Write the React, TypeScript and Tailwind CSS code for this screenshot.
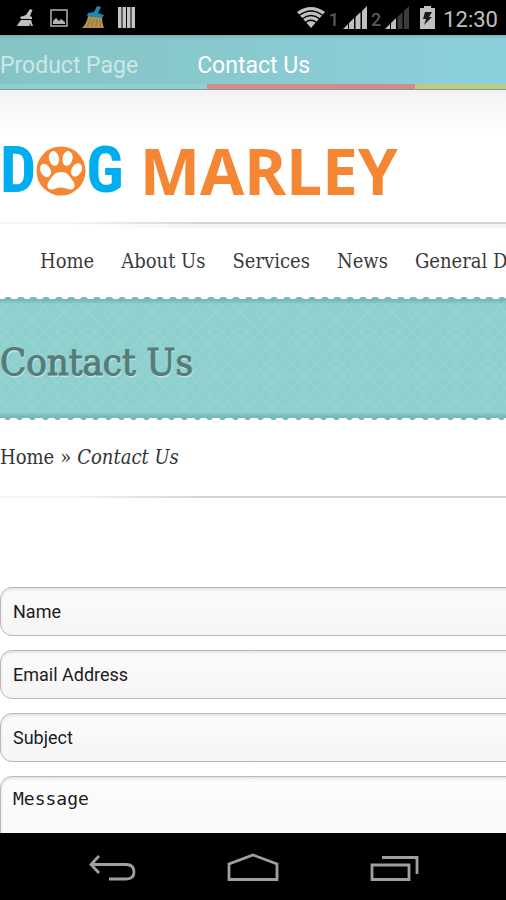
import { useState } from "react";

type Tab = "product" | "contact";

const navItems = [
  { label: "Home", href: "#home" },
  { label: "About Us", href: "#about" },
  { label: "Services", href: "#services" },
  { label: "News", href: "#news" },
  { label: "General D", href: "#general" },
];

const fields = [
  { id: "name", label: "Name", type: "text" },
  { id: "email", label: "Email Address", type: "email" },
  { id: "subject", label: "Subject", type: "text" },
];

const fieldClass =
  "block w-full rounded-xl border border-[#b8b8b8] bg-linear-to-b from-[#fcfcfc] to-[#f5f5f5] px-3 text-[18px] text-[#1c1c1c] shadow-[inset_0_2px_3px_#e4e4e4] outline-none placeholder:text-[#1c1c1c] placeholder:opacity-100";

function SignalIcon({ dim }: { dim?: boolean }) {
  return (
    <svg width="24" height="23" viewBox="0 0 24 23" aria-hidden="true">
      <path d="M0 23 5 18V23Z M6 17 11 12V23H6Z" fill="#c0c0c0" />
      <path
        d="M12.500 11 17.500 6V23H12.500Z M19 5 24 0V23H19Z"
        fill={dim ? "#3c3c3c" : "#c0c0c0"}
      />
    </svg>
  );
}

function StatusBar() {
  return (
    <div className="flex h-[35px] shrink-0 items-center justify-between bg-black pr-2 pl-4 font-[Roboto,sans-serif] text-[#c0c0c0]">
      <div className="flex items-center gap-4">
        {/* Cleaner notification */}
        <svg width="18" height="18" viewBox="0 0 18 18" aria-hidden="true">
          <path
            d="M14 0 16.500 1 14 7 16 8V10H5L4 8 10 6Z M5 11H15L17 17H15L14 14 13.500 17H1L2 15Z"
            fill="#c0c0c0"
          />
        </svg>
        {/* Screenshot notification */}
        <svg width="18" height="18" viewBox="0 0 18 18" aria-hidden="true">
          <path d="M1 1H17V17H1Z" fill="none" stroke="#b4b4b4" strokeWidth="1.500" />
          <path d="M3 15V12L6 9 9 12 11 10 15 13V15Z" fill="#b4b4b4" />
        </svg>
        {/* Broom */}
        <svg className="-ml-0.5" width="22" height="23" viewBox="0 0 22 23" aria-hidden="true">
          <path d="M6 10 20 11Q20 17 22 22H0Q5 17 6 10Z" fill="#b2914a" />
          <path d="M9 13 5 21M12 13 9 21M15 13 14 21M18 13 18 21" stroke="#94743a" />
          <path d="M15 0 19 1 16 7 22 9 20 12 5 10 6 7 12 6Z" fill="#1e86b4" />
        </svg>
        <svg className="-ml-0.5" width="18" height="21" viewBox="0 0 18 21" aria-hidden="true">
          <path
            d="M0 0H3.500V21H0ZM4.500 0H8V21H4.500ZM9 0H12.500V21H9ZM13.500 0H17V21H13.500Z"
            fill="#c4c4c4"
          />
        </svg>
      </div>

      <div className="flex items-center">
        <svg width="28" height="21" viewBox="0 0 28 21" aria-hidden="true">
          <path d="M0 5Q14-5 28 5L14 21Z" fill="#c0c0c0" />
          <path
            d="M2 8.500Q14-.5 26 8.500M5 12Q14 5 23 12M8.500 15.500Q14 11 19.500 15.500"
            fill="none"
            stroke="#000"
            strokeWidth="1.500"
          />
        </svg>
        <span className="mt-1 mr-1 ml-1 text-lg leading-none font-medium text-[#5a5a5a]">1</span>
        <SignalIcon />
        <span className="mt-1 mr-1 ml-1 text-lg leading-none font-medium text-[#5a5a5a]">2</span>
        <SignalIcon dim />
        <svg className="ml-[11px]" width="15" height="23" viewBox="0 0 15 23" aria-hidden="true">
          <path d="M4 0H11V2H15V23H0V2H4Z" fill="#c0c0c0" />
          <path d="M5 6H12L9 11H12L4 19 6 13H3Z" fill="#1a1a1a" />
        </svg>
        <span className="mt-1 ml-2 text-[22px]">12:30</span>
      </div>
    </div>
  );
}

function TabBar({ tab, setTab }: { tab: Tab; setTab: (tab: Tab) => void }) {
  return (
    <div className="shrink-0 bg-linear-to-r from-[#86c4c4] to-[#8ad0dc] font-[Roboto,sans-serif] text-[23px]">
      <div className="h-1 bg-linear-to-b from-[#6fa5a8]/60 to-transparent" />
      <div className="flex h-[45px] items-center gap-[59px] pt-[10px]">
        <button
          onClick={() => setTab("product")}
          className={tab === "product" ? "text-white" : "text-[#cde7e7]"}
        >
          Product Page
        </button>
        <button
          onClick={() => setTab("contact")}
          className={tab === "contact" ? "text-white" : "text-[#cde7e7]"}
        >
          Contact Us
        </button>
      </div>
      <div className="flex h-[6px] border-b border-[#829a9a]">
        <div className="w-[41%] bg-[#8ed0ce]" />
        <div className="w-[41%] bg-[#cf8c8a]" />
        <div className="flex-1 bg-[#bfca86]" />
      </div>
    </div>
  );
}

function Paw() {
  return (
    <svg className="size-[50px] shrink-0" viewBox="0 0 50 50" aria-hidden="true">
      <circle cx="25" cy="25" r="24.500" fill="#f58634" />
      <g fill="#fff">
        <ellipse cx="18" cy="12.500" rx="5" ry="7.500" transform="rotate(-12 18 12.500)" />
        <ellipse cx="31.500" cy="12.500" rx="5" ry="7.500" transform="rotate(12 31.500 12.500)" />
        <ellipse cx="9.500" cy="24.500" rx="5" ry="7" transform="rotate(-28 9.500 24.500)" />
        <ellipse cx="40.500" cy="24" rx="5" ry="7" transform="rotate(28 40.500 24)" />
        <path d="M25 26C32 26 34 31 37 35C41 41 37 45 32 43Q25 40 18 43C13 45 9 41 13 35C16 31 18 26 25 26Z" />
      </g>
    </svg>
  );
}

function Logo() {
  return (
    <a
      href="#home"
      aria-label="Dog Marley"
      className="flex h-[132px] items-center pt-[30px] text-[64px] leading-none font-bold"
    >
      <span className="font-['Roboto_Condensed',Roboto,sans-serif] text-[#00adef]">D</span>
      <Paw />
      <span className="font-['Roboto_Condensed',Roboto,sans-serif] text-[#00adef]">G</span>
      <span className="ml-4 font-['Noto_Sans',sans-serif] text-[#f58634]">MARLEY</span>
    </a>
  );
}

/* One tile holds three scallops, 38px wide */
function Scallops({ id, flip }: { id: string; flip?: boolean }) {
  return (
    <svg className="block h-[4px] w-full" aria-hidden="true">
      <pattern id={id} width="38" height="4" patternUnits="userSpaceOnUse">
        <path
          d={
            flip
              ? "M0 0H38V1H36L34 3H31L29 1H23L21 3H18L16 1H11L9 3H6L4 1H0Z"
              : "M0 4V3H4L6 1H10L12 3H17L19 1H23L25 3H29L31 1H35L38 3V4Z"
          }
          fill="#79b8b6"
        />
      </pattern>
      <rect width="100%" height="4" fill={`url(#${id})`} />
    </svg>
  );
}

function Banner() {
  return (
    <div>
      <Scallops id="scallop-top" />
      <div className="relative bg-[#8dd0cd]">
        <svg className="absolute inset-0 size-full" aria-hidden="true">
          <pattern id="lattice" width="38" height="38" patternUnits="userSpaceOnUse">
            <path
              d="M0 38 38 0M0 25.330 25.330 0M0 12.670 12.670 0M12.670 38 38 12.670M25.330 38 38 25.330M0 0 38 38M0 12.670 25.330 38M0 25.330 12.670 38M12.670 0 38 25.330M25.330 0 38 12.670"
              stroke="#9dd7d6"
              strokeWidth="0.800"
              fill="none"
            />
          </pattern>
          <rect width="100%" height="100%" fill="url(#lattice)" />
        </svg>
        <div className="relative h-1 bg-linear-to-b from-[#76b7b5] to-transparent" />
        <h1 className="relative flex h-[108px] items-center pt-2 font-['DejaVu_Serif_Condensed','DejaVu_Serif',serif] text-[38px] text-[#577b79] [-webkit-text-stroke:1px_#577b79] [text-shadow:1px_2px_1px_#c4e6e4]">
          Contact Us
        </h1>
        <div className="relative h-[5px] bg-linear-to-t from-[#76b7b5] to-transparent" />
      </div>
      <Scallops id="scallop-bottom" flip />
    </div>
  );
}

function SystemNav() {
  return (
    <div className="flex h-[67px] shrink-0 items-center justify-center gap-[90px] bg-black">
      <button aria-label="Back">
        <svg width="50" height="30" viewBox="0 0 50 30" fill="none" stroke="#a0a0a0" strokeWidth="2.800">
          <path d="M12 4 4 12.500 12 21M4 12.500H39Q47 12.500 47 20Q47 27 39 27H22" />
        </svg>
      </button>
      <button aria-label="Home">
        <svg width="52" height="30" viewBox="0 0 52 30" fill="none" stroke="#a0a0a0" strokeWidth="2.800">
          <path d="M2 27.500V12L26 3 50 12V27.500Z" />
        </svg>
      </button>
      <button aria-label="Recent apps">
        <svg width="50" height="30" viewBox="0 0 50 30" fill="none" stroke="#a0a0a0" strokeWidth="2.800">
          <path d="M3 13H40V27.500H3ZM13 5.500H48V22" />
        </svg>
      </button>
    </div>
  );
}

export default function App() {
  const [tab, setTab] = useState<Tab>("contact");

  return (
    <div className="flex h-screen flex-col overflow-hidden bg-white">
      <StatusBar />
      <TabBar tab={tab} setTab={setTab} />

      <main className="min-h-0 flex-1 overflow-hidden">
        <header className="bg-linear-to-b from-[#f2f2f2] to-white to-20%">
          <Logo />
          <div className="h-[2px] bg-linear-to-r from-[#f4f4f4] from-15% to-[#d4d4d4] to-40%" />
          <div className="h-1 bg-linear-to-r from-white from-15% to-[#f4f4f4] to-40%" />
          <nav className="flex h-[68px] items-center gap-[27px] overflow-hidden pb-0.5 pl-10 font-['DejaVu_Serif_Condensed','DejaVu_Serif',serif] text-xl whitespace-nowrap text-[#3a3a3a]">
            {navItems.map((item) => (
              <a key={item.label} href={item.href}>
                {item.label}
              </a>
            ))}
          </nav>
        </header>

        <Banner />

        <div className="flex h-[75px] items-center gap-[6px] pb-1 font-['DejaVu_Serif_Condensed','DejaVu_Serif',serif] text-xl text-[#333]">
          <a href="#home">Home</a>
          <span>»</span>
          <em>Contact Us</em>
        </div>
        <div className="h-[2px] bg-linear-to-r from-[#f4f4f4] from-15% to-[#d4d4d4] to-40%" />

        {/* Form runs past the right edge of the screen */}
        <form className="-mr-6 flex flex-col gap-[14px] pt-[89px] font-[Roboto,sans-serif]">
          {fields.map((field) => (
            <input
              key={field.id}
              type={field.type}
              aria-label={field.label}
              placeholder={field.label}
              className={`h-[49px] ${fieldClass}`}
            />
          ))}
          <textarea
            aria-label="Message"
            placeholder="Message"
            className={`h-40 resize-none pt-2 font-['DejaVu_Sans_Mono',monospace] ${fieldClass}`}
          />
        </form>
      </main>

      <SystemNav />
    </div>
  );
}
